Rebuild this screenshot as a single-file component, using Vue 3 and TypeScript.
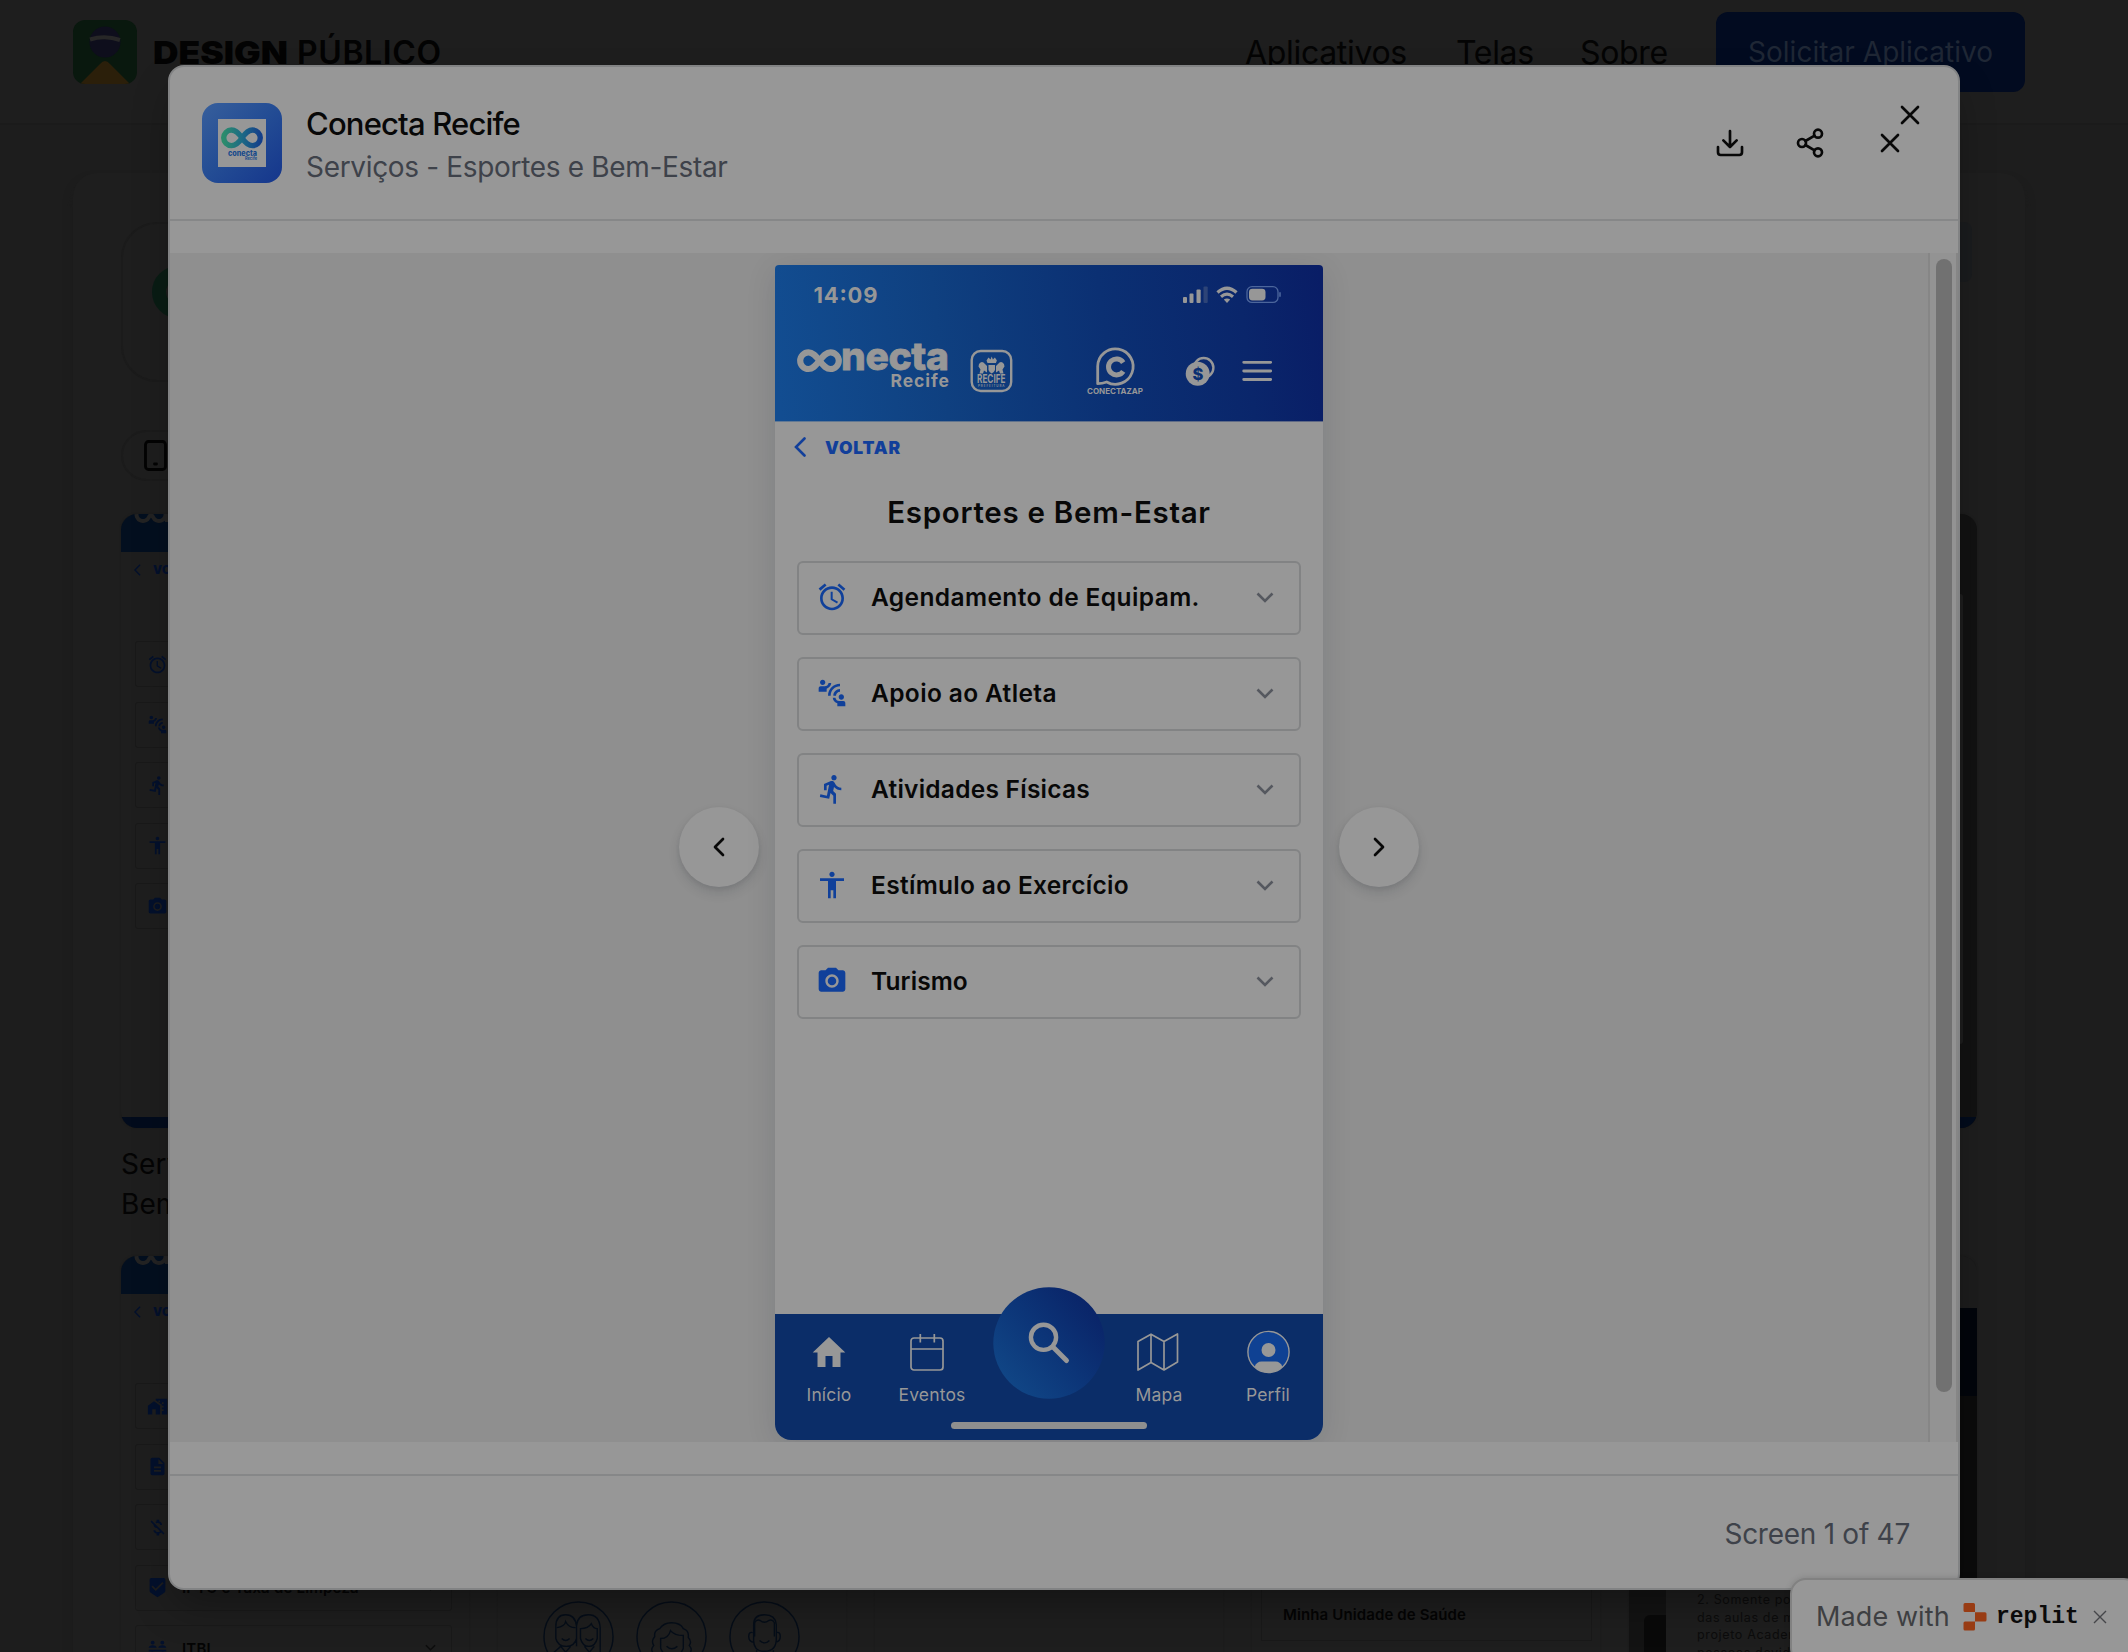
<script setup lang="ts">
interface MenuRow { label: string; icon: string; spacing?: number }

const icons: Record<string, string> = {
  alarm: 'M22 5.72l-4.6-3.86-1.29 1.53 4.6 3.86L22 5.72zM7.88 3.39L6.6 1.86 2 5.71l1.29 1.53 4.59-3.85zM12.5 8H11v6l4.75 2.85.75-1.23-4-2.37V8zM12 4c-4.97 0-9 4.03-9 9s4.02 9 9 9c4.97 0 9-4.03 9-9s-4.03-9-9-9zm0 16c-3.87 0-7-3.13-7-7s3.13-7 7-7 7 3.13 7 7-3.13 7-7 7z',
  connect: 'M11 14H9c0-4.97 4.03-9 9-9v2c-3.87 0-7 3.13-7 7zm7-3V9c-2.76 0-5 2.24-5 5h2c0-1.66 1.34-3 3-3zM7 4c0-1.11-.89-2-2-2s-2 .89-2 2 .89 2 2 2 2-.89 2-2zm4.45.5h-2C9.21 5.92 7.99 7 6.5 7h-3C2.67 7 2 7.67 2 8.5V11h6V8.74c1.86-.59 3.25-2.23 3.45-4.24zM19 17c1.11 0 2-.89 2-2s-.89-2-2-2-2 .89-2 2 .89 2 2 2zm1.5 1h-3c-1.49 0-2.71-1.08-2.95-2.5h-2c.2 2.01 1.59 3.65 3.45 4.24V22h6v-2.5c0-.83-.67-1.5-1.5-1.5z',
  run: 'M13.49 5.48c1.1 0 2-.9 2-2s-.9-2-2-2-2 .9-2 2 .9 2 2 2zm-3.6 13.9l1-4.4 2.1 2v6h2v-7.5l-2.1-2 .6-3c1.3 1.5 3.3 2.5 5.5 2.5v-2c-1.9 0-3.5-1-4.3-2.4l-1-1.6c-.4-.6-1-1-1.7-1-.3 0-.5.1-.8.1l-5.2 2.2v4.7h2v-3.4l1.8-.7-1.6 8.1-4.9-1-.4 2 7 1.4z',
  body: 'M12 2c1.1 0 2 .9 2 2s-.9 2-2 2-2-.9-2-2 .9-2 2-2zm9 7h-6v13h-2v-6h-2v6H9V9H3V7h18v2z',
  camera: 'M12 8.8a3.2 3.2 0 1 0 0 6.4 3.2 3.2 0 0 0 0-6.4zM9 2L7.17 4H4c-1.1 0-2 .9-2 2v12c0 1.1.9 2 2 2h16c1.1 0 2-.9 2-2V6c0-1.1-.9-2-2-2h-3.17L15 2H9zm3 15c-2.76 0-5-2.24-5-5s2.24-5 5-5 5 2.24 5 5-2.24 5-5 5z',
  building: 'M1 11v10h5v-6h4v6h5V11L8 6zM10 3v1.97l7 5V11h2v2h-2v2h2v2h-2v4h6V3H10zm5 4h-2V5h2v2zm4 2h-2V7h2v2z',
  document: 'M14 2H6c-1.1 0-1.99.9-1.99 2L4 20c0 1.1.89 2 1.99 2H18c1.1 0 2-.9 2-2V8l-6-6zm2 16H8v-2h8v2zm0-4H8v-2h8v2zm-3-5V3.5L18.5 9H13z',
  moneyOff: 'M12.5 6.9c1.78 0 2.44.85 2.5 2.1h2.21c-.07-1.72-1.12-3.3-3.21-3.81V3h-3v2.16c-.53.12-1.03.3-1.48.54l1.47 1.47c.41-.17.91-.27 1.51-.27zM5.33 4.06L4.06 5.33 7.5 8.77c0 2.08 1.56 3.21 3.91 3.91l3.51 3.51c-.34.48-1.05.91-2.42.91-2.06 0-2.87-.92-2.98-2.1h-2.2c.12 2.19 1.76 3.42 3.68 3.83V21h3v-2.15c.96-.18 1.82-.55 2.45-1.12l2.22 2.22 1.27-1.27L5.33 4.06z',
  shield: 'M19 1H5c-1.1 0-1.99.9-1.99 2L3 15.93c0 .69.35 1.3.88 1.66L12 23l8.11-5.41c.53-.36.88-.97.88-1.66L21 3c0-1.1-.9-2-2-2zm-9 15l-5-5 1.41-1.41L10 13.17l7.59-7.59L19 7l-9 9z',
  desk: 'M6.500 3a2.200 2.200 0 1 0 0 4.400 2.200 2.200 0 0 0 0-4.400zM17.500 3a2.200 2.200 0 1 0 0 4.400 2.200 2.200 0 0 0 0-4.400zM2 11c0-1.500 2-2.700 4.500-2.700S11 9.500 11 11zM13 11c0-1.500 2-2.700 4.500-2.700S22 9.500 22 11zM2 13.500h20v2H2zM5 15h2v7H5zM17 15h2v7h-2z',
}

const rows: MenuRow[] = [
  { label: 'Agendamento de Equipam.', icon: 'alarm', spacing: 0.4 },
  { label: 'Apoio ao Atleta', icon: 'connect', spacing: 0.37 },
  { label: 'Atividades Físicas', icon: 'run', spacing: 0.25 },
  { label: 'Estímulo ao Exercício', icon: 'body', spacing: 0.32 },
  { label: 'Turismo', icon: 'camera', spacing: 0.1 },
]

const thumbs: MenuRow[][] = [
  rows.map((r) => ({ label: '', icon: r.icon })),
  [
    { label: '', icon: 'building' },
    { label: '', icon: 'document' },
    { label: '', icon: 'moneyOff' },
    { label: 'IPTU e Taxa de Limpeza', icon: 'shield' },
    { label: 'ITBI', icon: 'desk' },
  ],
]
</script>

<template>
  <div class="page">
    <header class="site-header">
      <div class="brand">
        <svg class="brand-mark" viewBox="0 0 64 64">
          <defs><clipPath id="bm"><rect width="64" height="64" rx="12" /></clipPath></defs>
          <g clip-path="url(#bm)">
            <rect width="64" height="64" fill="#09180e" />
            <path d="M5 66L27 44Q32 38 37 44L59 66z" fill="#2b1f0a" />
            <circle cx="32" cy="22" r="15.500" fill="#0e0e1c" />
            <path d="M17 19.500Q32 15 47 20" stroke="#272727" stroke-width="4" fill="none" />
          </g>
        </svg>
        <span class="brand-a">DESIGN</span>
        <span class="brand-b">PÚBLICO</span>
      </div>
      <nav class="site-nav">
        <span class="n1">Aplicativos</span>
        <span class="n2">Telas</span>
        <span class="n3">Sobre</span>
        <span class="cta">Solicitar Aplicativo</span>
      </nav>
    </header>

    <main class="site-main">
      <div class="banner">
        <div class="app-tile"><i class="ring"></i></div>
        <div class="side-tile"></div>
      </div>
      <div class="filter">
        <svg viewBox="0 0 24 32"><rect x="1.500" y="1.500" width="20" height="28" rx="3" /><path d="M10.500 24h2" /></svg>
      </div>
      <div class="gallery">
        <template v-for="(list, t) in thumbs" :key="t">
          <div class="cell">
            <div class="thumb">
              <div class="thumb-top">
                <svg viewBox="0 0 60 12"><path d="M16 -2a6.500 6.500 0 0 0 12 5q2-4 4 0a6.500 6.500 0 0 0 12-5" /><path d="M46 0v8" /></svg>
              </div>
              <div class="thumb-back">
                <svg viewBox="0 0 8 14"><path d="M7 1L1 7l6 6" /></svg><b>VOLTAR</b>
              </div>
              <div class="thumb-list">
                <div v-for="(r, i) in list" :key="i" class="thumb-row">
                  <svg viewBox="0 0 24 24"><path :d="icons[r.icon]" fill-rule="evenodd" /></svg>
                  <span>{{ r.label }}</span>
                  <svg v-if="r.label" class="tc" viewBox="0 0 12 8"><path d="M1 1l5 5 5-5" /></svg>
                </div>
              </div>
              <div v-if="t === 0" class="thumb-foot"></div>
            </div>
            <p v-if="t === 0" class="caption">Serviços - Esportes e<br />Bem-Estar</p>
          </div>
          <div class="cell">
            <div class="thumb">
              <div v-if="t === 1" class="avatars">
                <svg viewBox="0 0 72 72">
                  <circle cx="36" cy="36" r="35" />
                  <path d="M13 38V26q0-12 10-12t11 12v12q-2 8-10.500 8T13 38zM14 27q8-1 9-6 3 6 10 6M34 46V25q1-11 12-11t12 13v30M38 28q8 0 11-5 2 5 6 5v10q-2 8-8.500 8T38 38zM18 46l-9 8v18M28 46l-5 6-5-6M42 46l5 6 5-6M19 38q4 4 8 0M43 38q4 4 8 0" />
                </svg>
                <svg viewBox="0 0 72 72">
                  <circle cx="36" cy="36" r="35" />
                  <path d="M24 60q-8 0-6-7-4-3 0-8-3-4 1-9-1-6 5-8 4-6 12-6 9 0 12 6 6 2 5 9 4 4 1 8 4 5 0 8 2 7-6 7M25 48V38q8 0 10-8 4 5 13 5v13q-3 8-11.500 8T25 48zM31 46q5 5 11 0M24 60l-8 12M48 60l8 12" />
                </svg>
                <svg viewBox="0 0 72 72">
                  <circle cx="36" cy="36" r="35" />
                  <path d="M26 36V22q2-4 6-2 4 3 8 0 4-2 6 2v14M25 38V24q0-10 11-10t12 10v14q0 13-12 13T25 38zM24 32q-4-1-4 4t5 6M48 32q4-1 4 4t-5 6M31 40q5 5 10 0M28 50v8L14 66M45 50v8l13 8" />
                </svg>
              </div>
            </div>
          </div>
          <div class="cell"><div class="thumb"></div></div>
          <div class="cell">
            <div class="thumb">
              <div v-if="t === 1" class="unit-card">Minha Unidade de Saúde</div>
            </div>
          </div>
          <div class="cell">
            <div class="thumb" :class="'last' + t">
              <template v-if="t === 0">
                <div class="strip"></div>
                <div class="thumb-foot"></div>
              </template>
              <template v-else>
                <div class="l-top"></div>
                <div class="l-navy"></div>
                <div class="l-doc">
                  <div class="l-side"><i></i></div>
                  <p>2. Somente poderão<br />das aulas de musculação<br />projeto Academia<br />pessoas devidamente</p>
                  <div class="l-edge"></div>
                </div>
              </template>
            </div>
          </div>
        </template>
      </div>
    </main>

    <section class="modal">
      <div class="modal-head">
        <svg class="app-icon" viewBox="0 0 80 80">
          <defs>
            <linearGradient id="ai" x1="0" y1="0" x2="1" y2="1">
              <stop offset="0" stop-color="#375f9c" /><stop offset=".5" stop-color="#234c94" /><stop offset="1" stop-color="#15368c" />
            </linearGradient>
            <linearGradient id="inf" x1="0" y1="0" x2="1" y2="0">
              <stop offset="0" stop-color="#2c8c6c" /><stop offset=".5" stop-color="#1d6a85" /><stop offset="1" stop-color="#143f8a" />
            </linearGradient>
          </defs>
          <rect width="80" height="80" rx="16" fill="url(#ai)" />
          <rect x="16" y="16" width="48" height="48" fill="#979797" />
          <path d="M40 35C36 29 33 27 29.500 27a7.800 7.800 0 0 0 0 15.600C33 42.600 36 41 40 35C44 29 47 27 50.500 27a7.800 7.800 0 0 1 0 15.600C47 42.600 44 41 40 35z" fill="none" stroke="url(#inf)" stroke-width="5.400" />
          <text x="26" y="53.300" textLength="29" lengthAdjust="spacingAndGlyphs" font-size="7.500" font-weight="800" fill="#174a8c">conecta</text>
          <text x="43" y="57.300" textLength="12" lengthAdjust="spacingAndGlyphs" font-size="4.200" font-weight="700" fill="#174a8c">Recife</text>
        </svg>
        <div class="titles">
          <h2>Conecta Recife</h2>
          <p>Serviços - Esportes e Bem-Estar</p>
        </div>
        <div class="actions">
          <svg viewBox="0 0 24 24"><path d="M21 15v4a2 2 0 0 1-2 2H5a2 2 0 0 1-2-2v-4M7 10l5 5 5-5M12 15V3" /></svg>
          <svg viewBox="0 0 24 24"><circle cx="18" cy="5" r="3" /><circle cx="6" cy="12" r="3" /><circle cx="18" cy="19" r="3" /><path d="M8.590 13.510l6.830 3.980M15.410 6.510l-6.820 3.980" /></svg>
          <svg viewBox="0 0 24 24"><path d="M18 6L6 18M6 6l12 12" /></svg>
        </div>
        <svg class="corner-x" viewBox="0 0 24 24"><path d="M18 6L6 18M6 6l12 12" /></svg>
      </div>

      <div class="modal-body">
        <div class="stage">
          <button class="round"><svg viewBox="0 0 24 24"><path d="M15 18l-6-6 6-6" /></svg></button>

          <article class="phone">
            <svg class="phone-top" viewBox="0 0 548 157">
              <defs>
                <linearGradient id="pt" gradientUnits="userSpaceOnUse" x1="0" y1="100" x2="548" y2="30">
                  <stop offset="0" stop-color="#124d91" /><stop offset=".3" stop-color="#0f4080" /><stop offset=".6" stop-color="#0b3073" /><stop offset=".85" stop-color="#0a266b" /><stop offset="1" stop-color="#091d66" />
                </linearGradient>
              </defs>
              <rect width="548" height="156.400" fill="url(#pt)" />
              <g fill="#979797">
                <text x="38.500" y="37.700" font-size="22" font-weight="700" textLength="64">14:09</text>
                <rect x="408" y="32" width="4" height="6" rx="1" /><rect x="414.500" y="28.500" width="4" height="9.500" rx="1" /><rect x="421.500" y="24.500" width="4.200" height="13.500" rx="1" />
                <rect x="428.500" y="21.500" width="4.200" height="16.500" rx="1" opacity=".25" />
              </g>
              <g fill="none" stroke="#979797">
                <path d="M442.500 27.500q9.500-8.500 19 0" stroke-width="3.400" />
                <path d="M446 31.700q6-5 12 0" stroke-width="3.200" />
                <path d="M448.800 34.600q3.200-2.200 6.400 0L452 38z" fill="#979797" stroke="none" />
                <rect x="472" y="21.700" width="31" height="15.700" rx="5" stroke="#4c669c" stroke-width="1.300" />
                <path d="M505 27.300v4.500" stroke="#4c669c" stroke-width="1.600" />
              </g>
              <rect x="474" y="23.700" width="16.500" height="11.700" rx="3.400" fill="#979797" />

              <path d="M44.500 95.700C40 90 37.500 87.400 33.500 87.400a8.300 8.300 0 0 0 0 16.600C37.500 104 40 101.500 44.500 95.700C49 90 51.500 87.400 55.500 87.400a8.300 8.300 0 0 1 0 16.600C51.500 104 49 101.500 44.500 95.700z" fill="none" stroke="#979797" stroke-width="6.200" />
              <g fill="#979797">
                <text x="66" y="105.300" font-size="39" font-weight="800" textLength="108" stroke="#979797" stroke-width=".8">necta</text>
                <text x="115.500" y="122" font-size="17.500" font-weight="700" textLength="58.500">Recife</text>
              </g>

              <rect x="196.700" y="86" width="39.500" height="40" rx="9" fill="none" stroke="#979797" stroke-width="2.400" />
              <g fill="#979797">
                <path d="M211.500 95.500l2-3 2 2 1.200-3 1.200 3 2-2 2 3-1 2.500h-8.400zM204 99q3-4 6 0l2 2v6.500l-3-2-1 3h-3.500l1-4-2-3zM229 99q-3-4-6 0l-2 2v6.500l3-2 1 3h3.500l-1-4 2-3z" />
                <path d="M213.500 100h6.500v5q-1 2.500-3.300 3.500-2.400-1-3.200-3.500z" />
                <text x="202" y="118" font-size="11.500" font-weight="700" textLength="28.500" lengthAdjust="spacingAndGlyphs">RECIFE</text>
                <text x="203" y="122" font-size="3" font-weight="600" textLength="26.500">PREFEITURA</text>
              </g>

              <path d="M322.700 118.700v-17.400a17.700 17.700 0 1 1 9 15.700q-4.500 1.700-9 1.700z" fill="none" stroke="#979797" stroke-width="2.800" stroke-linejoin="round" />
              <path d="M348.200 97.500a8 8 0 1 0 0 8.800" fill="none" stroke="#979797" stroke-width="5" />
              <text x="312" y="129.200" font-size="7.800" font-weight="700" fill="#979797" textLength="56" lengthAdjust="spacingAndGlyphs">CONECTAZAP</text>

              <circle cx="428.700" cy="102.700" r="9.700" fill="none" stroke="#979797" stroke-width="2.400" />
              <circle cx="422.700" cy="108.700" r="12" fill="#979797" />
              <text x="417.600" y="114.700" font-size="16.500" font-weight="800" fill="#0b2f72">$</text>
              <path d="M468.700 97.300h27M468.700 106h27M468.700 114.500h27" stroke="#979797" stroke-width="2.800" stroke-linecap="round" />
            </svg>

            <div class="back">
              <svg viewBox="0 0 12 20"><path d="M10.500 1.500L2 10l8.500 8.500" /></svg>
              <span>VOLTAR</span>
            </div>
            <h3>Esportes e Bem-Estar</h3>
            <ul class="menu">
              <li v-for="r in rows" :key="r.icon">
                <svg class="mi" viewBox="0 0 24 24"><path :d="icons[r.icon]" fill-rule="evenodd" /></svg>
                <span :style="{ letterSpacing: r.spacing + 'px' }">{{ r.label }}</span>
                <svg class="chev" viewBox="0 0 18 11"><path d="M1.500 1.500L9 9l7.500-7.500" /></svg>
              </li>
            </ul>

            <div class="tabbar">
              <div class="tab t1"><svg viewBox="0 0 44 44"><path d="M18.500 37v-11h7v11h8V22.500h4.800L22 7 5.700 22.500h4.800V37z" fill="#979797" /></svg><span>Início</span></div>
              <div class="tab t2"><svg viewBox="0 0 44 44"><g fill="none" stroke="#979797" stroke-width="1.700"><rect x="1" y="8" width="32" height="32" rx="3" /><path d="M1 19h32M10.300 4v8.500M24.300 4v8.500" /></g></svg><span>Eventos</span></div>
              <div class="fab">
                <svg viewBox="0 0 112 112">
                  <defs><linearGradient id="fb" x1=".1" y1=".8" x2=".85" y2=".15"><stop offset="0" stop-color="#104585" /><stop offset=".5" stop-color="#0c3578" /><stop offset="1" stop-color="#0a2569" /></linearGradient></defs>
                  <circle cx="56" cy="56" r="55.700" fill="url(#fb)" />
                  <circle cx="50.500" cy="50.300" r="12.600" fill="none" stroke="#979797" stroke-width="4.400" />
                  <path d="M60 60l13.500 13.500" stroke="#979797" stroke-width="5" stroke-linecap="round" />
                </svg>
              </div>
              <div class="tab t3"><svg viewBox="0 0 44 44"><path d="M1 11.500l13-7.300 13 7.300 13.500-7.500v28L27 40l-13-7.500L1 40zM14 4.200v28.300M27 11.500V40" fill="none" stroke="#979797" stroke-width="1.700" stroke-linejoin="round" /></svg><span>Mapa</span></div>
              <div class="tab t4"><svg viewBox="0 0 44 44"><defs><clipPath id="pc"><circle cx="22.500" cy="22" r="20.500" /></clipPath></defs><circle cx="22.500" cy="22" r="20.600" fill="#0f4193" stroke="#979797" stroke-width="1.400" /><g clip-path="url(#pc)" fill="#979797"><circle cx="22.500" cy="20" r="7" /><path d="M8.500 46V37q2-5.500 7-5.500h14q5 0 7 5.500v9z" /></g></svg><span>Perfil</span></div>
            </div>
            <div class="home-bar"><i></i></div>
          </article>

          <button class="round"><svg viewBox="0 0 24 24"><path d="M9 18l6-6-6-6" /></svg></button>
        </div>
        <div class="scrollbar"><i></i></div>
      </div>

      <footer class="modal-foot">Screen 1 of 47</footer>
    </section>

    <aside class="replit">
      <span class="made">Made with</span>
      <svg class="rl" viewBox="0 0 24 28"><path d="M2 0h8.500q1.500 0 1.500 1.500V9H2Q.5 9 .5 7.500v-6Q.5 0 2 0zM12 9.300h10q1.500 0 1.500 1.500V17q0 1.500-1.500 1.500H12zM2 18.600h10v7.500q0 1.500-1.500 1.500H2q-1.500 0-1.500-1.500v-6q0-1.500 1.500-1.500z" fill="#983c14" /></svg>
      <span class="rw">replit</span>
      <svg class="rx" viewBox="0 0 14 14"><path d="M1 1l12 12M13 1L1 13" /></svg>
    </aside>
  </div>
</template>

<style>
body { background: #1e1e1e; }
</style>

<style scoped>
* { box-sizing: border-box; }
.page {
  position: relative; width: 2128px; height: 1652px; overflow: hidden;
  background: #1d1d1d; font-family: "Inter", "Liberation Sans", sans-serif; color: #050505;
}
h2, h3, p, ul { margin: 0; padding: 0; }
svg { display: block; flex: none; }

.site-header { display: flex; justify-content: space-between; height: 125px; padding: 0 103px 0 73px; background: #1e1e1e; border-bottom: 2px solid #1b1b1b; }
.brand { display: flex; align-items: center; height: 104px; }
.brand-mark { width: 64px; height: 64px; margin-right: 16px; }
.brand-a { width: 144px; font-size: 31px; font-weight: 900; color: #030303; transform: scaleX(1.14); transform-origin: left; }
.brand-b { font-size: 32px; font-weight: 600; letter-spacing: .6px; color: #030303; }
.site-nav { display: flex; align-items: center; height: 104px; font-size: 32px; letter-spacing: -.32px; color: #040404; }
.n1 { width: 211px; } .n2 { width: 124px; } .n3 { width: 136px; }
.cta { display: flex; align-items: center; justify-content: center; width: 309px; height: 80px; border-radius: 12px; background: #020b20; color: #1f2735; font-size: 28px; letter-spacing: .03px; }

.site-main { width: 1952px; height: 1600px; margin: 48px 0 0 73px; padding: 49px 48px 0; border-radius: 24px; background: #1e1e1e; box-shadow: 0 8px 10px 0 #1b1b1b; }
.banner { display: flex; justify-content: space-between; height: 160px; }
.app-tile { width: 160px; height: 160px; border: 2px solid #1b1b1b; border-radius: 36px; padding: 42px 0 0 29px; }
.ring { display: block; width: 52px; height: 52px; border: 14px solid #091c14; border-radius: 50%; }
.side-tile { width: 120px; height: 60px; margin-right: 5px; background: #1a1c1e; border-radius: 0 8px 8px 0; }
.filter { display: flex; align-items: center; width: 200px; height: 51px; margin-top: 48px; padding-left: 21px; border: 2px solid #1b1b1b; border-radius: 26px; }
.filter svg { width: 24px; height: 32px; fill: none; stroke: #030303; stroke-width: 2.800; stroke-linecap: round; }
.gallery { display: grid; grid-template-columns: repeat(5, 348px); column-gap: 29px; grid-template-rows: 614px 614px; row-gap: 128px; margin-top: 33px; }
.cell { height: 614px; }
.thumb { display: flex; flex-direction: column; width: 348px; height: 614px; border-radius: 16px; overflow: hidden; background: #1e1e1e; box-shadow: 0 0 2px #1a1a1a; }
.thumb-top { height: 38px; background: #030f1f; }
.thumb-top svg { width: 60px; height: 12px; fill: none; stroke: #232323; stroke-width: 4; }
.thumb-back { display: flex; align-items: center; height: 35px; padding-left: 13px; color: #03102c; }
.thumb-back svg { width: 7px; height: 12px; fill: none; stroke: currentColor; stroke-width: 1.600; }
.thumb-back b { margin-left: 12px; font-size: 11.500px; font-weight: 900; letter-spacing: .5px; }
.thumb-list { display: flex; flex-direction: column; gap: 14.600px; margin: 54px 0 0 14px; }
.thumb-row { display: flex; align-items: center; flex: none; width: 317px; height: 46px; padding: 0 15px 0 11px; border: 1px solid #191919; border-radius: 3px; font-size: 15px; font-weight: 600; letter-spacing: .2px; color: #040404; }
.thumb-row svg { width: 21px; height: 21px; fill: #03102c; }
.thumb-row span { margin-left: 14px; flex: 1; white-space: nowrap; }
.thumb-row .tc { width: 11px; height: 8px; fill: none; stroke: #0d0d0d; stroke-width: 1.500; }
.thumb-foot { flex: none; height: 11px; margin-top: auto; background: #020b1c; }
.caption { margin-top: 5px; padding-top: 11px; font-size: 28px; line-height: 40px; letter-spacing: .1px; color: #040404; white-space: nowrap; }
.avatars { display: flex; gap: 22px; margin: 345px 0 0 45px; }
.avatars svg { width: 71px; height: 71px; fill: none; stroke: #050d18; stroke-width: 1.400; }
.unit-card { display: flex; align-items: flex-end; width: 331px; height: 200px; margin: 185px 0 0 9px; padding: 0 0 16px 21px; border: 1px solid #191919; font-size: 15px; line-height: 18px; font-weight: 600; letter-spacing: .12px; color: #040404; }
.last0 { background: #121212; }
.strip { width: 334px; height: 450px; margin-top: 80px; background: #1e1e1e; border-radius: 3px; }
.last1 { background: #1d1d1d; }
.l-top { height: 52px; }
.l-navy { height: 88px; background: #02050b; }
.l-doc { display: flex; height: 474px; background: #1e1e1e; font-size: 12.500px; line-height: 17.600px; letter-spacing: .65px; color: #0c0c0c; }
.l-side { width: 37px; padding: 219px 0 0 15px; background: #131313; }
.l-side i { display: block; width: 22px; height: 60px; border-radius: 6px 0 0; background: #090909; }
.l-doc p { width: 294px; padding: 195px 0 0 31px; white-space: nowrap; }
.l-edge { width: 17px; background: #0b0b0b; }

.modal { position: absolute; left: 168px; top: 65px; width: 1792px; height: 1525px; display: flex; flex-direction: column; border: 2px solid #828384; border-radius: 16px; overflow: hidden; background: #979797; box-shadow: 0 20px 40px -8px rgba(0, 0, 0, .35); }
.modal-head { position: relative; display: flex; height: 154px; padding: 35px 52px 0 32px; border-bottom: 2px solid #868788; }
.app-icon { width: 80px; height: 80px; margin-top: .5px; }
.titles { flex: 1; margin-left: 24px; }
.titles h2 { font-size: 31px; line-height: 43px; font-weight: 500; letter-spacing: -.82px; color: #080808; }
.titles p { font-size: 28px; line-height: 44px; letter-spacing: -.33px; color: #3e424a; }
.actions { display: flex; gap: 48px; padding-top: 24.500px; }
.actions svg, .corner-x { width: 32px; height: 32px; fill: none; stroke: #080808; stroke-width: 2; stroke-linecap: round; stroke-linejoin: round; }
.corner-x { position: absolute; left: 1724px; top: 31.500px; }
.modal-body { display: flex; height: 1189px; padding: 32px 0; border-bottom: 2px solid #868788; box-sizing: content-box; }
.stage { display: flex; align-items: center; justify-content: center; gap: 16px; width: 1758px; height: 1189px; background: #8f8f8f; overflow: hidden; }
.round { display: flex; align-items: center; justify-content: center; width: 80px; height: 80px; margin-bottom: 2px; padding: 0; border: 0; border-radius: 50%; background: #979797; box-shadow: 0 6px 12px rgba(20, 24, 32, .12), 0 2px 4px rgba(20, 24, 32, .08); }
.round svg { width: 32px; height: 32px; fill: none; stroke: #080808; stroke-width: 2; stroke-linecap: round; stroke-linejoin: round; }
.phone { display: flex; flex-direction: column; align-self: flex-start; width: 548px; height: 1175px; margin-top: 12px; border-radius: 4px 4px 16px 16px; overflow: hidden; background: #979797; box-shadow: 0 6px 30px rgba(20, 26, 40, .12); }
.phone-top { width: 548px; height: 157px; }
.back { display: flex; align-items: center; height: 50px; padding: 0 0 0 19px; font-size: 17.500px; font-weight: 900; letter-spacing: .82px; color: #123f9a; }
.back svg { width: 12px; height: 20px; margin-right: 19px; fill: none; stroke: #123f9a; stroke-width: 2.600; stroke-linecap: round; }
.phone h3 { height: 89px; padding-top: 20px; font-size: 29.500px; line-height: 40px; font-weight: 600; letter-spacing: .72px; text-align: center; color: #080808; }
.menu { display: flex; flex-direction: column; gap: 22px; padding: 0 22px; list-style: none; }
.menu li { display: flex; align-items: center; height: 74px; padding: 0 25px 2px 17px; border: 2px solid #828384; border-radius: 6px; font-size: 24.500px; font-weight: 600; color: #080808; }
.menu li span { flex: 1; margin-left: 23px; white-space: nowrap; }
.mi { width: 32px; height: 32px; fill: #10409a; }
.chev { width: 18px; height: 11px; fill: none; stroke: #55585f; stroke-width: 2.600; }
.tabbar { display: flex; position: relative; height: 100px; margin-top: auto; padding: 16px 0 0; background: #0b2d68; color: #979797; font-size: 17.500px; font-weight: 400; letter-spacing: .15px; }
.tab { display: flex; flex-direction: column; align-items: center; width: 100px; }
.tab svg { width: 44px; height: 44px; margin-bottom: 9px; }
.tab span { line-height: 24px; }
.t1 { margin-left: 4px; } .t2 { margin-left: 3px; }
.t3 { margin-left: 127px; } .t4 { margin-left: 9px; }
.fab { position: absolute; left: 218px; top: -27px; width: 112px; height: 112px; }
.home-bar { height: 26px; padding-top: 8px; background: #0b2d68; }
.home-bar i { display: block; width: 196px; height: 7px; margin: 0 auto; border-radius: 4px; background: #8f8f8f; }
.scrollbar { width: 30px; padding: 6px 0 0 6px; border-left: 2px solid #868686; border-right: 2px solid #868686; background: #939393; }
.scrollbar i { display: block; width: 16px; height: 1133px; border-radius: 8px; background: #717171; }
.modal-foot { display: flex; align-items: center; justify-content: flex-end; height: 112px; padding: 3px 48px 0 0; font-size: 28px; letter-spacing: -.27px; color: #3e424a; }

.replit { position: absolute; left: 1790px; top: 1578px; display: flex; align-items: center; width: 350px; height: 86px; padding: 0 0 9px 24px; border: 2px solid #818181; border-radius: 16px; background: #979797; box-shadow: 0 0 6px rgba(0, 0, 0, .15); }
.made { width: 147px; font-size: 27px; letter-spacing: .1px; color: #3e3f42; }
.rl { width: 24px; height: 28px; margin-right: 9px; }
.rw { width: 97px; font-family: "Liberation Mono", monospace; font-size: 23px; font-weight: 700; color: #0b0b0b; }
.rx { width: 14px; height: 14px; fill: none; stroke: #45464a; stroke-width: 1.400; }
</style>
